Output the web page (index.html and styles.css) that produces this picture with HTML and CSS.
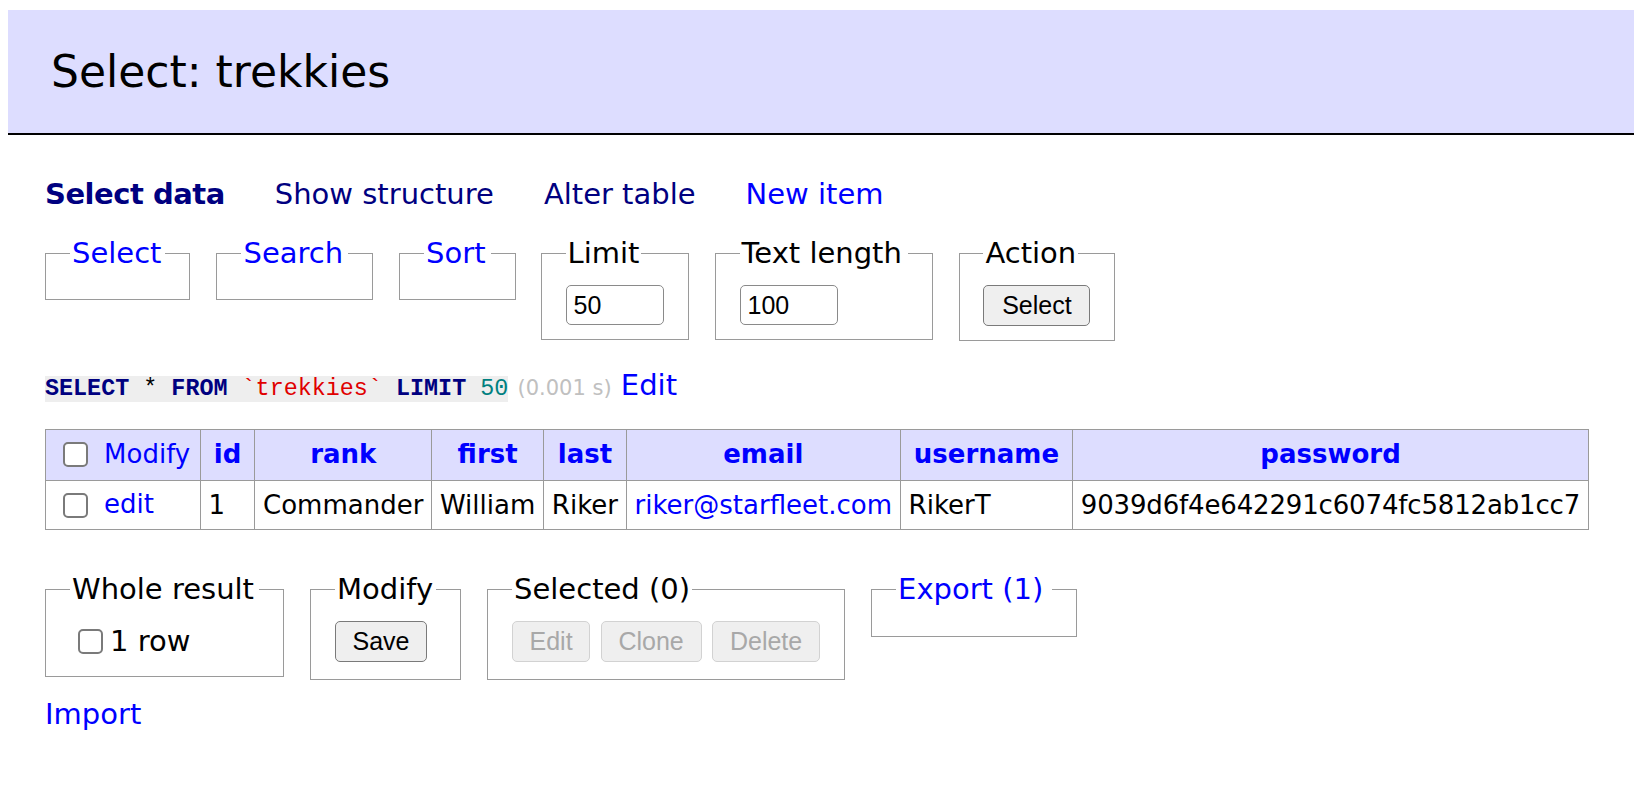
FILE: index.html
```html
<!DOCTYPE html>
<html lang="en">
<head>
<meta charset="utf-8">
<title>Select: trekkies</title>
<link rel="stylesheet" href="styles.css">
</head>
<body>
<h2 class="title">Select: trekkies</h2>
<div class="content">
  <p class="links">
    <a class="current" href="#">Select data</a>
    <a class="visited" href="#">Show structure</a>
    <a class="visited" href="#">Alter table</a>
    <a href="#">New item</a>
  </p>
  <form class="controls">
    <fieldset class="box"><legend class="toggle lg-select"><a href="#">Select</a></legend></fieldset>
    <fieldset class="box"><legend class="toggle lg-search"><a href="#">Search</a></legend></fieldset>
    <fieldset class="box"><legend class="toggle lg-sort"><a href="#">Sort</a></legend></fieldset>
    <fieldset class="box"><legend>Limit</legend><input class="field" type="text" value="50"></fieldset>
    <fieldset class="box"><legend class="lg-text">Text length</legend><input class="field" type="text" value="100"></fieldset>
    <fieldset class="box box-action"><legend>Action</legend><button class="btn btn-select" type="button">Select</button></fieldset>
  </form>
  <p class="query"><code class="sql"><span class="kw">SELECT</span> * <span class="kw">FROM</span> <span class="ident">`trekkies`</span> <span class="kw">LIMIT</span> <span class="num">50</span></code> <span class="time">(0.001 s)</span> <a href="#">Edit</a></p>
  <table class="data">
    <thead>
      <tr>
        <td class="first"><input class="check" type="checkbox"> <a href="#">Modify</a></td>
        <th><a href="#">id</a></th>
        <th><a href="#">rank</a></th>
        <th><a href="#">first</a></th>
        <th><a href="#">last</a></th>
        <th><a href="#">email</a></th>
        <th><a href="#">username</a></th>
        <th><a href="#">password</a></th>
      </tr>
    </thead>
    <tbody>
      <tr>
        <td class="first"><input class="check" type="checkbox"> <a href="#">edit</a></td>
        <td>1</td>
        <td>Commander</td>
        <td>William</td>
        <td>Riker</td>
        <td><a href="#">riker@starfleet.com</a></td>
        <td>RikerT</td>
        <td class="hash">9039d6f4e642291c6074fc5812ab1cc7</td>
      </tr>
    </tbody>
  </table>
  <div class="footer">
    <fieldset class="box"><legend class="lg-whole">Whole result</legend><label class="rows"><input class="check check-row" type="checkbox">1 row</label></fieldset>
    <fieldset class="box"><legend class="lg-modify">Modify</legend><div class="btns"><button class="btn btn-save" type="button">Save</button></div></fieldset>
    <fieldset class="box"><legend>Selected (0)</legend>
      <div class="btns">
        <button class="btn btn-off btn-edit" type="button" disabled>Edit</button>
        <button class="btn btn-off btn-clone" type="button" disabled>Clone</button>
        <button class="btn btn-off btn-delete" type="button" disabled>Delete</button>
      </div>
    </fieldset>
    <fieldset class="box"><legend class="toggle lg-export"><a href="#">Export (1)</a></legend></fieldset>
  </div>
  <p class="import"><a href="#">Import</a></p>
</div>
</body>
</html>
```
FILE: styles.css
```css
html, body {
  background: #fff;
}
body {
  margin: 10px 10px 0 8px;
  color: #000;
  font-family: "DejaVu Sans", Verdana, sans-serif;
  font-size: 29px;
  line-height: 1.25;
}
a {
  color: #0000ff;
  text-decoration: none;
}
.title {
  margin: 0;
  padding: 35px 42px 34px 43px;
  height: 54px;
  font-size: 44px;
  font-weight: normal;
  line-height: 54px;
  background: #ddddff;
  border-bottom: 2px solid #000;
}
.content {
  padding-left: 37px;
}
.links {
  margin: 41px 0 0 0;
  display: flex;
  gap: 50px;
}
.links a.visited,
.links a.current {
  color: #000080;
}
.links a.current {
  font-weight: bold;
  letter-spacing: -0.48px;
}
.controls,
.footer {
  display: flex;
  align-items: flex-start;
  gap: 26px;
  margin-top: 23px;
}
.box {
  margin: 0;
  padding: 14px 24px;
  border: 1px solid #9a9a9a;
  min-width: 0;
}
.box-action {
  padding: 14px 23.5px;
}
.footer .box {
  padding-bottom: 15px;
}
.box legend {
  padding: 0 2px;
  line-height: 36px;
}
.box legend.lg-select { padding-right: 4px; }
.box legend.lg-search { padding-right: 5px; }
.box legend.lg-sort { padding-right: 5px; }
.box legend.lg-text { padding-right: 6px; }
.box legend.lg-whole { padding-right: 5px; }
.box legend.lg-modify { padding-right: 3px; }
.box legend.lg-export { padding-right: 9px; }
.controls .box:nth-child(4) {
  margin-left: -1px;
}
.field {
  display: block;
  box-sizing: border-box;
  width: 98px;
  height: 40px;
  margin: 0;
  padding: 0 7px;
  border: 1.5px solid #8a8a8a;
  border-radius: 5px;
  font-family: "Liberation Sans", Arial, sans-serif;
  font-size: 25px;
  color: #000;
  background: #fff;
}
.btn {
  display: block;
  box-sizing: border-box;
  height: 41px;
  margin: 0;
  padding: 0;
  border: 1.5px solid #7a7a7a;
  border-radius: 5px;
  background: #efefef;
  font-family: "Liberation Sans", Arial, sans-serif;
  font-size: 25px;
  color: #000;
}
.btn-select {
  width: 107px;
}
.btn-save {
  width: 92px;
}
.btns {
  display: flex;
  gap: 10.5px;
  padding-bottom: 2px;
}
.btn-off {
  color: #a8a8a8;
  border-color: #d2d2d2;
  background: #efefef;
}
.btn-edit { width: 78px; }
.btn-clone { width: 101px; }
.btn-delete { width: 108px; }
.query {
  margin: 26px 0 0 0;
}
.sql {
  background: #eeeeee;
  font-family: "Liberation Mono", "Courier New", monospace;
  font-size: 23.4px;
}
.sql .kw {
  color: #000080;
  font-weight: bold;
}
.sql .ident {
  color: #e00000;
}
.sql .num {
  color: #008080;
}
.time {
  color: #c0c0c0;
  font-size: 21px;
}
.data {
  margin-top: 24px;
  border-collapse: collapse;
  font-size: 26px;
  line-height: 1.25;
}
.data td,
.data th {
  border: 1px solid #9a9a9a;
  padding: 5.2px 7.8px;
  white-space: nowrap;
  text-align: left;
}
.data thead td,
.data thead th {
  background: #ddddff;
}
.data thead th {
  text-align: center;
  padding: 5.2px 13px;
  font-weight: bold;
}
.data td.first {
  padding-right: 9.5px;
}
.data td.hash {
  letter-spacing: -0.16px;
  padding-right: 8px;
}
.check {
  appearance: none;
  -webkit-appearance: none;
  box-sizing: border-box;
  width: 25px;
  height: 25px;
  margin: 6.5px 8px 6.5px 9px;
  vertical-align: middle;
  border: 2px solid #7a7a7a;
  border-radius: 5px;
  background: #fff;
}
.data thead .check {
  margin-top: 7.5px;
  margin-bottom: 7.5px;
}
.rows {
  display: flex;
  align-items: center;
  height: 40px;
}
.check-row {
  margin: 0 7px 0 8px;
}
.footer {
  margin-top: 41px;
}
.import {
  margin: 16px 0 0 0;
}
```
